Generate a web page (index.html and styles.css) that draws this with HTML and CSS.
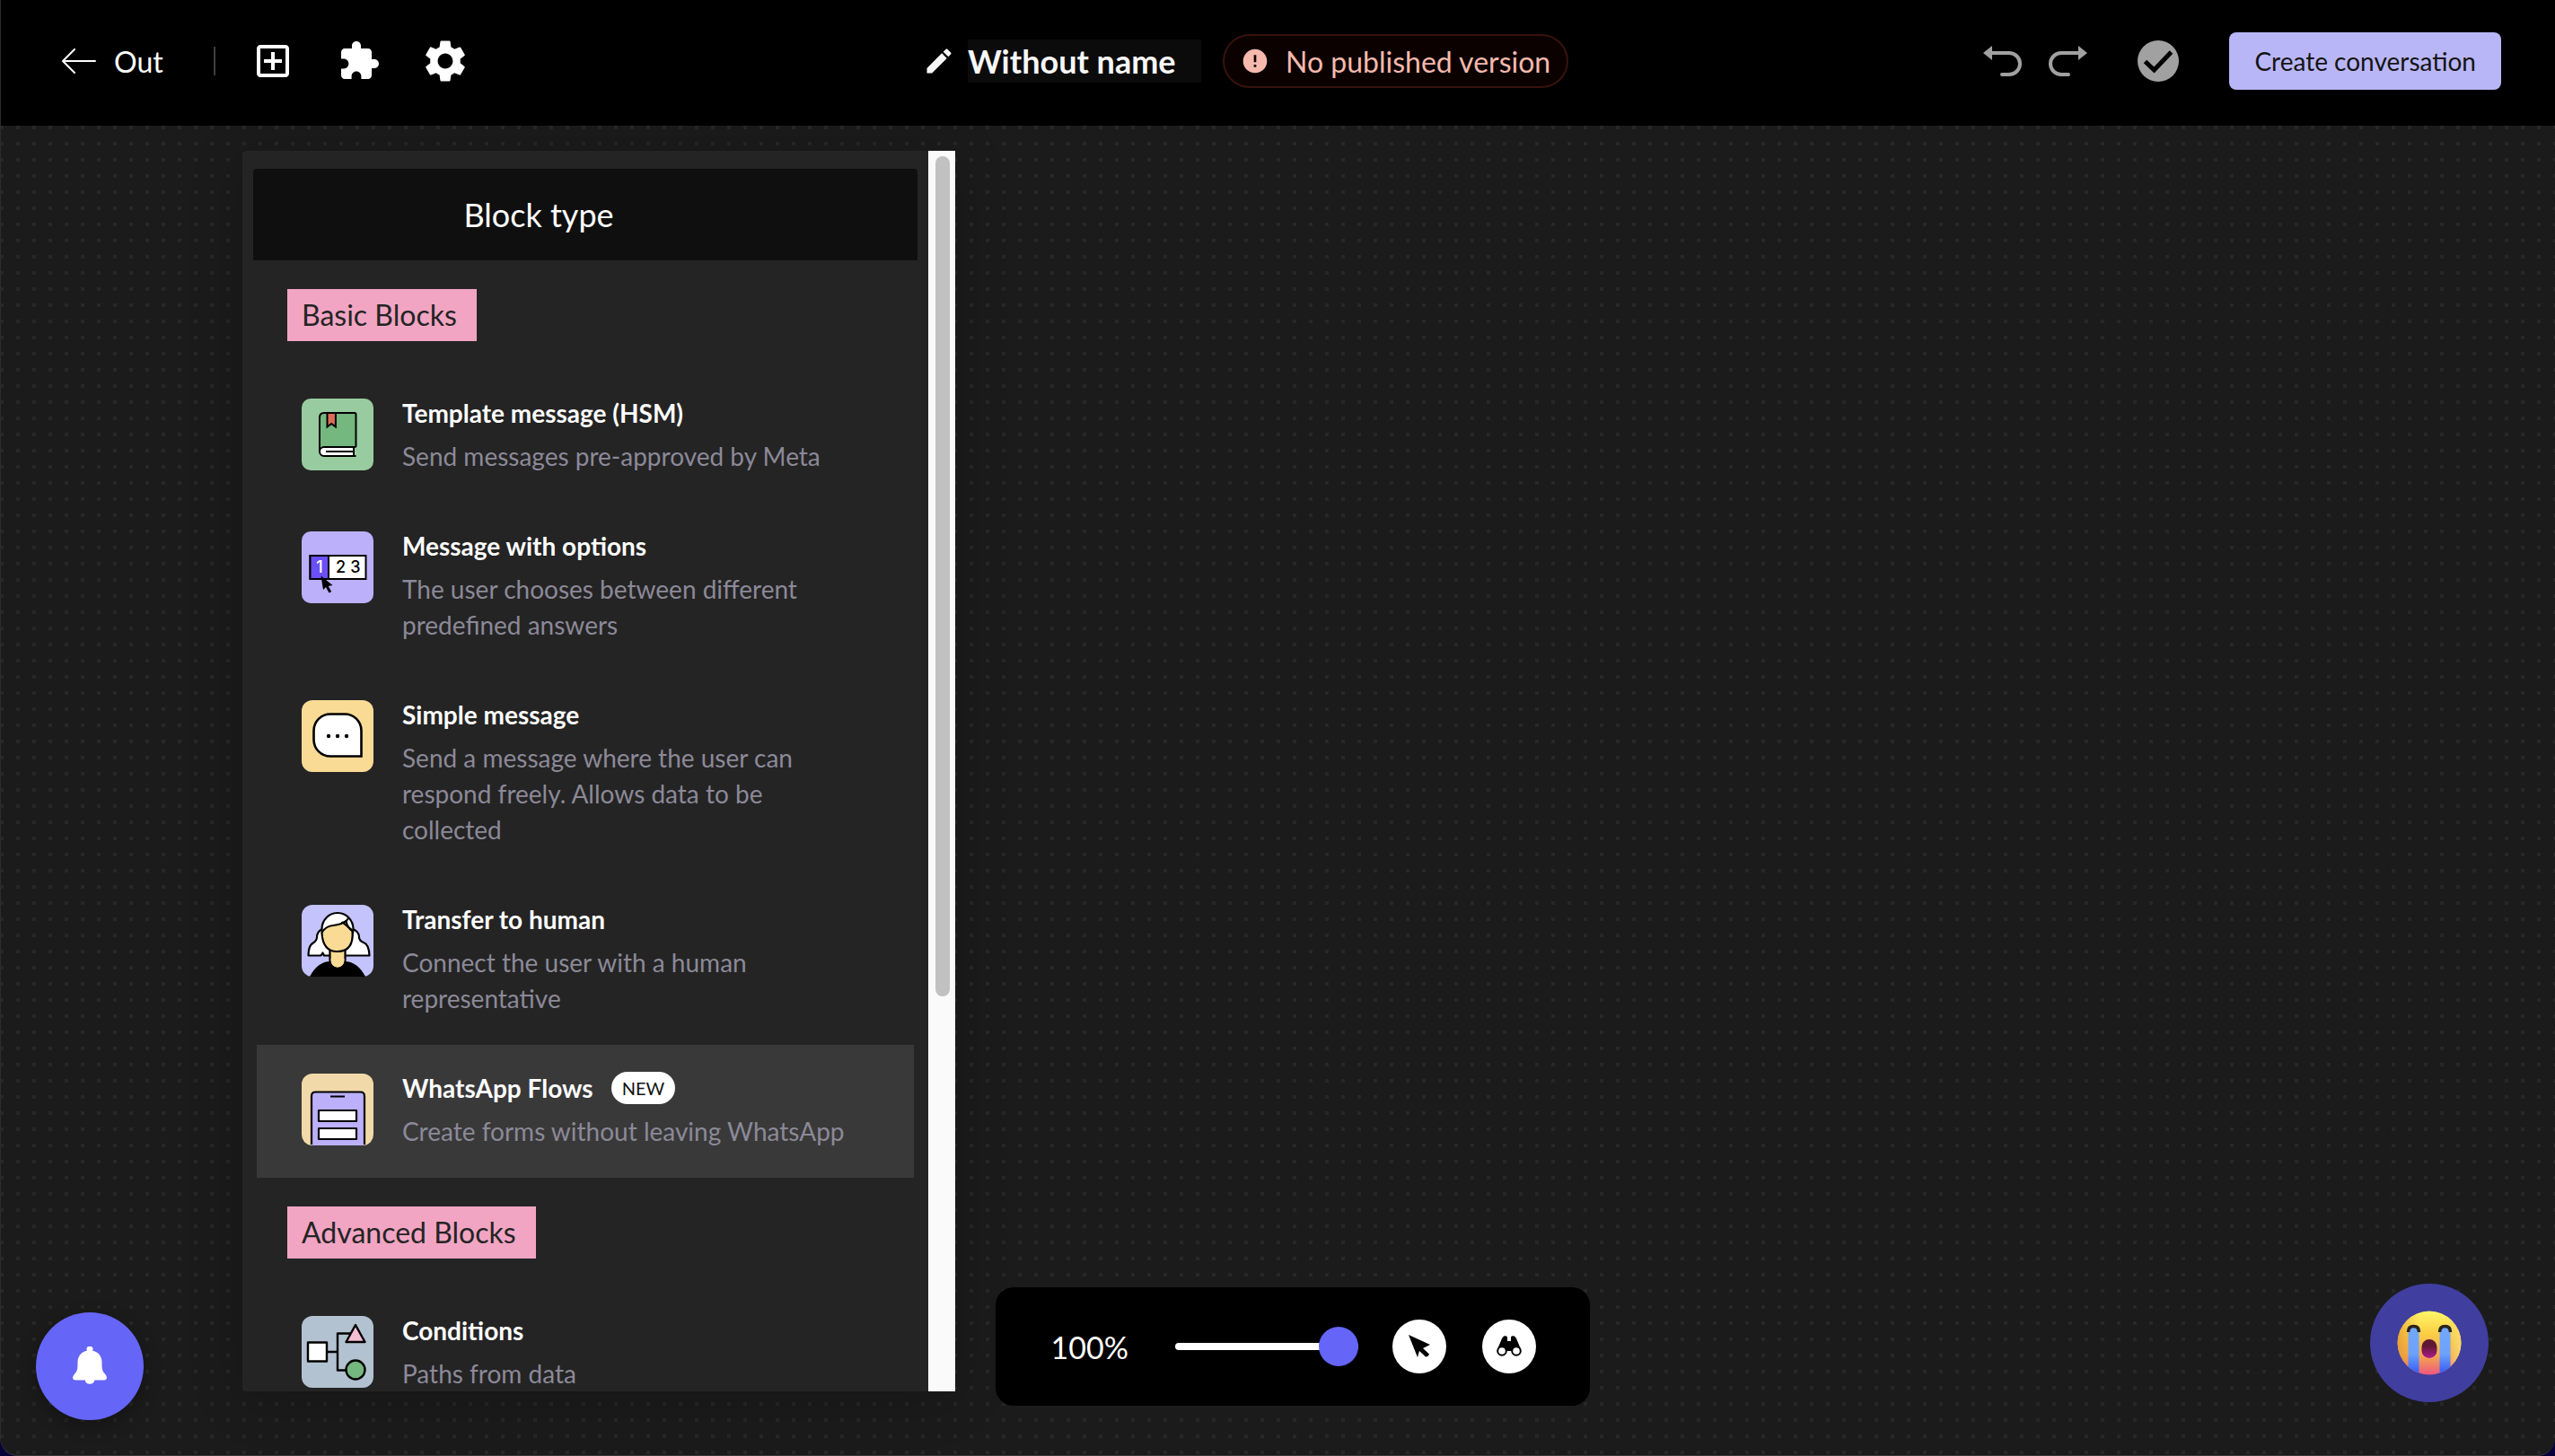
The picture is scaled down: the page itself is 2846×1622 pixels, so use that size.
FILE: index.html
```html
<!DOCTYPE html>
<html lang="en">
<head>
<meta charset="utf-8">
<title>Conversation builder</title>
<link rel="stylesheet" href="styles.css">
</head>
<body>
<div class="app">
  <header class="topbar">
    <nav class="topbar-left">
      <a class="back" href="#">
        <svg width="38" height="28" viewBox="0 0 38 28" fill="none" stroke="currentColor" stroke-width="2" stroke-linecap="round" stroke-linejoin="round"><path d="M37 14H1M14 1L1 14l13 13"/></svg>
        <span>Out</span>
      </a>
      <span class="divider"></span>
      <div class="tools">
        <button class="icon-button" type="button" aria-label="Add block">
          <svg width="48" height="48" viewBox="0 0 24 24" fill="currentColor"><path d="M19 3H5c-1.100 0-2 .9-2 2v14c0 1.100.9 2 2 2h14c1.100 0 2-.9 2-2V5c0-1.100-.9-2-2-2zm0 16H5V5h14v14zm-8-2h2v-4h4v-2h-4V7h-2v4H7v2h4z"/></svg>
        </button>
        <button class="icon-button" type="button" aria-label="Integrations">
          <svg width="48" height="48" viewBox="0 0 24 24" fill="currentColor"><path d="M20.500 11H19V7c0-1.100-.9-2-2-2h-4V3.500C13 2.120 11.880 1 10.500 1S8 2.120 8 3.500V5H4c-1.100 0-1.990.9-1.990 2v3.800H3.500c1.490 0 2.700 1.210 2.700 2.700s-1.210 2.700-2.700 2.700H2V20c0 1.100.9 2 2 2h3.800v-1.500c0-1.490 1.210-2.700 2.700-2.700 1.490 0 2.700 1.210 2.700 2.700V22H17c1.100 0 2-.9 2-2v-4h1.500c1.380 0 2.500-1.120 2.500-2.500S21.880 11 20.500 11z"/></svg>
        </button>
        <button class="icon-button" type="button" aria-label="Settings">
          <svg width="56" height="56" viewBox="0 0 24 24" fill="currentColor"><path d="M19.140 12.940c.04-.3.06-.61.06-.94 0-.32-.02-.64-.07-.94l2.030-1.580c.18-.14.23-.41.12-.61l-1.920-3.320c-.12-.22-.37-.29-.59-.22l-2.390.96c-.5-.38-1.030-.7-1.620-.94l-.36-2.540c-.04-.24-.24-.41-.48-.41h-3.840c-.24 0-.43.17-.47.41l-.36 2.540c-.59.24-1.130.57-1.620.94l-2.390-.96c-.22-.08-.47 0-.59.22L2.740 8.870c-.12.21-.08.47.12.61l2.030 1.580c-.05.3-.09.63-.09.94s.02.64.07.94l-2.030 1.580c-.18.14-.23.41-.12.61l1.920 3.320c.12.22.37.29.59.22l2.390-.96c.5.38 1.030.7 1.620.94l.36 2.540c.05.24.24.41.48.41h3.840c.24 0 .44-.17.47-.41l.36-2.540c.59-.24 1.130-.56 1.620-.94l2.390.96c.22.08.47 0 .59-.22l1.920-3.320c.12-.22.07-.47-.12-.61l-2.010-1.580zM12 15.600c-1.980 0-3.600-1.620-3.600-3.600s1.620-3.600 3.600-3.600 3.600 1.620 3.600 3.600-1.620 3.600-3.600 3.600z"/></svg>
        </button>
      </div>
    </nav>

    <div class="topbar-center">
      <label class="name-field">
        <svg width="36" height="36" viewBox="0 0 24 24" fill="currentColor"><path d="M3 17.250V21h3.750L17.810 9.940l-3.750-3.750L3 17.250zM20.710 7.040c.39-.39.39-1.020 0-1.410l-2.340-2.340c-.39-.39-1.020-.39-1.410 0l-1.830 1.830 3.750 3.750 1.830-1.830z"/></svg>
        <input class="name-input" type="text" value="Without name" aria-label="Conversation name">
      </label>
      <div class="status">
        <svg width="32" height="32" viewBox="0 0 24 24" fill="currentColor"><path d="M12 2C6.480 2 2 6.480 2 12s4.480 10 10 10 10-4.480 10-10S17.520 2 12 2zm1 15h-2v-2h2v2zm0-4h-2V7h2v6z"/></svg>
        <span>No published version</span>
      </div>
    </div>

    <div class="topbar-right">
      <div class="history">
        <button class="icon-button muted" type="button" aria-label="Undo">
          <svg width="44" height="34" viewBox="0 0 44 34"><path d="M0 8L10 0v16z" fill="currentColor"/><path d="M9 8h20a12 12 0 0 1 0 24h-8" fill="none" stroke="currentColor" stroke-width="4" stroke-linecap="round"/></svg>
        </button>
        <button class="icon-button muted" type="button" aria-label="Redo">
          <svg width="44" height="34" viewBox="0 0 44 34"><path d="M44 8L34 0v16z" fill="currentColor"/><path d="M35 8H15a12 12 0 0 0 0 24h8" fill="none" stroke="currentColor" stroke-width="4" stroke-linecap="round"/></svg>
        </button>
      </div>
      <svg class="saved" width="46" height="46" viewBox="0 0 46 46"><circle cx="23" cy="23" r="23" fill="#a1a1a1"/><path d="M8.500 23.500L18.500 33 37.500 13" fill="none" stroke="#000" stroke-width="5"/></svg>
      <button class="primary" type="button">Create conversation</button>
    </div>
  </header>

  <main class="canvas">
    <aside class="panel">
      <div class="panel-body">
        <h2 class="panel-title">Block type</h2>

        <h3 class="tag">Basic Blocks</h3>
        <ul class="blocks">
          <li class="block">
            <svg class="block-icon" viewBox="0 0 80 80">
              <rect width="80" height="80" rx="10" fill="#98cca0"/>
              <path d="M22 17h38v37H20V20q0-3 2-3z" fill="#74b77f"/>
              <path d="M60 54H24a5 5 0 0 0 0 10h34V54z" fill="#fff"/>
              <path d="M20 59V21q0-5 5-5h34q1.500 0 1.500 1.500V53q0 1-1.500 1H25a5 5 0 0 0 0 10h35.500M58 54v10M27 59h31" fill="none" stroke="#000" stroke-width="2"/>
              <path d="M28.500 16v15.500l4.700-3.500 4.700 3.500V16z" fill="#dc6c57" stroke="#000" stroke-width="2"/>
            </svg>
            <div class="block-text">
              <h4>Template message (HSM)</h4>
              <p>Send messages pre-approved by Meta</p>
            </div>
          </li>
          <li class="block">
            <svg class="block-icon" viewBox="0 0 80 80">
              <rect width="80" height="80" rx="10" fill="#bcb0fa"/>
              <rect x="9.500" y="27" width="62" height="26" fill="#fff" stroke="#000" stroke-width="2"/>
              <rect x="9.500" y="27" width="20.500" height="26" fill="#6a50f6" stroke="#000" stroke-width="2"/>
              <g class="digits"><text x="20" y="46" fill="#fff">1</text><text x="43.500" y="46">2</text><text x="60" y="46">3</text></g>
              <path d="M21.500 49.500L24 65l3-3 3.500 6.500 2.700-1.500-3.500-6 4.800-1z" fill="#000"/>
            </svg>
            <div class="block-text">
              <h4>Message with options</h4>
              <p>The user chooses between different predefined answers</p>
            </div>
          </li>
          <li class="block">
            <svg class="block-icon" viewBox="0 0 80 80">
              <rect width="80" height="80" rx="12" fill="#f9db95"/>
              <path d="M32 15.500h16A18.500 18.500 0 0 1 66.500 34v28.500H32A18.500 18.500 0 0 1 13.500 44V34A18.500 18.500 0 0 1 32 15.500z" fill="#fff" stroke="#000" stroke-width="2.600"/>
              <circle cx="30" cy="40" r="2.200"/><circle cx="40" cy="40" r="2.200"/><circle cx="50" cy="40" r="2.200"/>
            </svg>
            <div class="block-text">
              <h4>Simple message</h4>
              <p>Send a message where the user can respond freely. Allows data to be collected</p>
            </div>
          </li>
          <li class="block">
            <svg class="block-icon" viewBox="0 0 80 80">
              <rect width="80" height="80" rx="12" fill="#c4c3fb"/>
              <path d="M9 80Q18 63 32 63h16q14 0 23 17z"/>
              <g stroke="#000" stroke-width="2.200" stroke-linejoin="round">
                <path d="M23 27q-6 3-6 9 0 4-5 7-4.500 3-4.500 13.500h14l2-3 1.500 3H32V27zM57 27q7 3 7 9 0 4 5 6 6 2 6.500 14.500H48V27z" fill="#fff"/>
                <path d="M31.500 48v14a8 8 0 0 0 17 0V48z" fill="#f9db95"/>
                <ellipse cx="40" cy="27" rx="17.500" ry="18" fill="#fff"/>
                <path d="M22.500 31q4-7 12-8 10-1 15-5 1 7 7 11 2 23-17 23-16 0-17-21z" fill="#f9db95"/>
                <path d="M44 20q5 0 8-5M45 19l12 10" fill="none"/>
              </g>
              <path d="M32.600 60v2a7 7 0 0 0 14.800 0v-2z" fill="#f9db95"/>
            </svg>
            <div class="block-text">
              <h4>Transfer to human</h4>
              <p>Connect the user with a human representative</p>
            </div>
          </li>
          <li class="block active">
            <svg class="block-icon" viewBox="0 0 80 80">
              <rect width="80" height="80" rx="12" fill="#f2d9a9"/>
              <path d="M11 80V25q0-4.500 4.500-4.500h50q4.500 0 4.500 4.500v55z" fill="#bcb0fa"/>
              <path d="M11 79V25q0-4.500 4.500-4.500h50q4.500 0 4.500 4.500v54M32 25.500h16" fill="none" stroke="#000" stroke-width="2.200"/>
              <g fill="#fff" stroke="#000" stroke-width="2.200" stroke-linejoin="round"><rect x="19" y="41" width="42" height="12"/><rect x="19" y="61" width="42" height="12"/></g>
            </svg>
            <div class="block-text">
              <h4>WhatsApp Flows <span class="badge">NEW</span></h4>
              <p>Create forms without leaving WhatsApp</p>
            </div>
          </li>
        </ul>

        <h3 class="tag">Advanced Blocks</h3>
        <ul class="blocks">
          <li class="block">
            <svg class="block-icon" viewBox="0 0 80 80">
              <rect width="80" height="80" rx="12" fill="#b3c2d1"/>
              <g stroke="#000" stroke-width="2.400" stroke-linejoin="round">
                <path d="M28 40h12M55 19.500H40v41h10" fill="none"/>
                <rect x="7" y="29.500" width="21" height="21" fill="#fff"/>
                <path d="M60 10l10.500 19h-21z" fill="#f4bfd3"/>
                <circle cx="60" cy="60" r="10.500" fill="#74b77f"/>
              </g>
            </svg>
            <div class="block-text">
              <h4>Conditions</h4>
              <p>Paths from data</p>
            </div>
          </li>
        </ul>
      </div>
      <div class="scrollbar"><div class="scroll-thumb"></div></div>
    </aside>

    <div class="zoombar">
      <label class="zoom-label" for="zoom">100%</label>
      <input class="zoom-range" id="zoom" type="range" min="10" max="100" value="100">
      <div class="zoom-actions">
        <button class="round" type="button" aria-label="Select">
          <svg width="26" height="26" viewBox="0 0 26 26"><path d="M1 0l24 11-8 4 7 6.500q-1 3-4 3L13 18l-2 7z"/></svg>
        </button>
        <button class="round" type="button" aria-label="Explore">
          <svg width="28" height="24" viewBox="0 0 28 24"><path d="M8 .5q3-1 4 1V6h4V1.500q1-2 4-1L22 3l5 12-3-1-6 1-1 2h-6l-1-2-6-1-3 1L6 3z"/><circle cx="6" cy="17" r="4.800" fill="#fff" stroke="#000" stroke-width="2"/><circle cx="22" cy="17" r="4.800" fill="#fff" stroke="#000" stroke-width="2"/></svg>
        </button>
      </div>
    </div>

    <button class="fab bell" type="button" aria-label="Notifications">
      <svg width="38" height="44" viewBox="0 0 38 44" fill="#fff"><path d="M19 0a2.800 2.800 0 0 1 2.800 4.600C28.500 6 32.500 11 32.500 18c0 9 .5 9 4.500 14 2 3 .5 5.500-2 5.500H24.300a5.400 5.400 0 0 1-10.600 0H3C.5 37.500-1 35 1 32c4-5 4.500-5 4.500-14C5.500 11 9.500 6 16.200 4.600A2.800 2.800 0 0 1 19 0z"/></svg>
    </button>

    <button class="fab feedback" type="button" aria-label="Feedback">
      <svg width="72" height="72" viewBox="0 0 72 72">
        <defs>
          <linearGradient id="face" x1="0" y1="0" x2="0" y2="1"><stop offset="0" stop-color="#fff868"/><stop offset=".35" stop-color="#fbcf46"/><stop offset=".7" stop-color="#f3a750"/><stop offset="1" stop-color="#ee5580"/></linearGradient>
          <linearGradient id="side" x1="0" y1="0" x2="1" y2="0"><stop offset="0" stop-color="#dd8a2c" stop-opacity=".6"/><stop offset=".35" stop-color="#f0b040" stop-opacity="0"/><stop offset=".75" stop-color="#f8d870" stop-opacity="0"/><stop offset="1" stop-color="#f8e070" stop-opacity=".9"/></linearGradient>
          <linearGradient id="tear" x1="0" y1="0" x2="0" y2="1"><stop offset="0" stop-color="#72a7fa"/><stop offset=".55" stop-color="#6ea2fa"/><stop offset=".9" stop-color="#3d66f6"/></linearGradient>
          <linearGradient id="mouth" x1="0" y1="0" x2="0" y2="1"><stop offset=".35" stop-color="#5e1733"/><stop offset="1" stop-color="#b01a90"/></linearGradient>
          <clipPath id="disc"><circle cx="36" cy="36" r="35.500"/></clipPath>
        </defs>
        <g clip-path="url(#disc)">
          <rect width="72" height="72" fill="url(#face)"/><rect width="72" height="72" fill="url(#side)"/>
          <path d="M12.500 72V24q0-5 6-5t6 5v48zM47.500 72V24q0-5 6-5t6 5v48z" fill="url(#tear)"/>
        </g>
        <path d="M12.500 24q0-6.500 6-6.500t6 6.500M47.500 24q0-6.500 6-6.500t6 6.500" fill="none" stroke="#272320" stroke-width="3.500"/>
        <rect x="27.500" y="32" width="17" height="21" rx="8.500" fill="url(#mouth)"/>
      </svg>
    </button>
  </main>
</div>
</body>
</html>
```

FILE: styles.css
```css
* { box-sizing: border-box; }

body {
  margin: 0;
  background: #08003a;
  color: #fff;
  font-family: Lato, "Liberation Sans", sans-serif;
  font-size: 28px;
}

h2, h3, h4, p, ul { margin: 0; padding: 0; font-weight: 400; }
ul { list-style: none; }
svg { display: block; flex: none; }
button, input { font: inherit; color: inherit; }
button { border: 0; padding: 0; background: none; cursor: pointer; }

.app {
  display: flex;
  flex-direction: column;
  height: 100vh;
  border-left: 1px solid #2c2c2c;
  border-bottom: 1px solid #3a3a3a;
  border-radius: 0 0 20px 20px;
  overflow: hidden;
  background: #1b1b1b;
}

/* Top bar */
.topbar {
  display: flex;
  align-items: center;
  justify-content: space-between;
  height: 140px;
  flex: none;
  padding: 0 60px 4px 68px;
  background: #000;
}

.topbar-left { display: flex; align-items: center; padding-right: 48px; }

.back {
  display: flex;
  align-items: center;
  gap: 20px;
  color: #fff;
  font-size: 32px;
  text-decoration: none;
}

.divider { width: 2px; height: 32px; margin: 0 40px 0 56px; background: #3f3f42; }
.tools { display: flex; align-items: center; gap: 48px; }

.icon-button {
  display: flex;
  align-items: center;
  justify-content: center;
  width: 48px;
  height: 48px;
}

.muted { color: #a1a1a1; }
.topbar-center { display: flex; align-items: center; gap: 24px; }
.name-field { display: flex; align-items: center; gap: 14px; color: #f7f7f7; }

.name-input {
  width: 260px;
  height: 48px;
  padding: 0;
  border: 0;
  background: #0b0b0b;
  font-size: 36px;
  font-weight: 700;
}

.status {
  display: flex;
  align-items: center;
  gap: 18px;
  height: 60px;
  padding: 0 18px;
  border: 2px solid #37130c;
  border-radius: 30px;
  background: #0b0200;
  color: #f5b9ad;
  font-size: 32px;
}

.topbar-right { display: flex; align-items: center; }
.history { display: flex; gap: 24px; }
.saved { margin: 0 56px 0 54px; }

.primary {
  height: 64px;
  padding: 0 28px;
  border-radius: 8px;
  background: #b9b6f8;
  color: #141414;
  font-size: 28px;
}

/* Canvas with its dotted grid */
.canvas {
  position: relative;
  display: flex;
  flex: 1;
  min-height: 0;
  padding: 28px 0 71px 269px;
  background-color: #1b1b1b;
  background-image: conic-gradient(from 270deg at 4px 4px, #272727 90deg, transparent 0);
  background-size: 18px 18px;
  background-position: -1px 0;
}

.panel {
  display: flex;
  width: 794px;
  border-radius: 4px 0 0 4px;
  overflow: hidden;
  background: #242424;
  box-shadow: 0 8px 60px rgba(0, 0, 0, .2);
}

.panel-body { flex: 1; overflow: hidden; padding: 20px 12px 0; }

.panel-title {
  height: 102px;
  padding-right: 104px;
  border-radius: 4px 4px 0 0;
  background: #0f0f0f;
  font-size: 36px;
  line-height: 102px;
  text-align: center;
}

.tag {
  width: max-content;
  height: 58px;
  margin: 32px 38px;
  padding: 0 22px 0 16px;
  background: #f2a5c3;
  color: #242424;
  font-size: 32px;
  line-height: 58px;
}

.blocks { padding: 0 4px; }
.block { display: flex; gap: 32px; padding: 32px 70px 32px 50px; }
.active { background: #393939; }
.block-icon { width: 80px; height: 80px; }
.block-text { flex: 1; }

.block h4 {
  display: flex;
  align-items: center;
  gap: 20px;
  height: 32px;
  margin-bottom: 12px;
  font-size: 28px;
  font-weight: 700;
  line-height: 32px;
}

.block p { color: #8c8998; font-size: 28px; line-height: 40px; }

.badge {
  height: 36px;
  padding: 0 12px;
  border-radius: 18px;
  background: #fff;
  color: #141414;
  font-size: 20px;
  font-weight: 400;
  line-height: 36px;
}

.digits { font-family: Inter, sans-serif; font-size: 18px; font-weight: 500; text-anchor: middle; }

.scrollbar {
  width: 30px;
  padding: 6px 6px 0 8px;
  background: #fafafa;
}

.scroll-thumb { height: 68%; border-radius: 8px; background: #c1c1c1; }

/* Zoom controls */
.zoombar {
  position: absolute;
  left: calc(50% + 16px);
  bottom: 55px;
  transform: translateX(-50%);
  display: flex;
  align-items: center;
  width: 662px;
  height: 132px;
  padding: 0 60px 0 62px;
  border-radius: 20px;
  background: #000;
}

.zoom-label { width: 138px; font-size: 34px; }

.zoom-range {
  width: 204px;
  height: 44px;
  margin: 0 38px 0 0;
  appearance: none;
  background: none;
}

.zoom-range::-webkit-slider-runnable-track { height: 8px; border-radius: 4px; background: #fff; }

.zoom-range::-webkit-slider-thumb {
  appearance: none;
  width: 44px;
  height: 44px;
  margin-top: -18px;
  border-radius: 50%;
  background: #6565f8;
}

.zoom-actions { display: flex; gap: 40px; }

.round {
  display: flex;
  align-items: center;
  justify-content: center;
  width: 60px;
  height: 60px;
  border-radius: 50%;
  background: #fff;
}

/* Floating buttons */
.fab {
  position: absolute;
  display: flex;
  align-items: center;
  justify-content: center;
  border-radius: 50%;
}

.bell {
  left: 39px;
  bottom: 39px;
  width: 120px;
  height: 120px;
  background: #6565f8;
  box-shadow: 0 6px 20px rgba(0, 0, 0, .3);
}

.feedback { right: 74px; bottom: 59px; width: 132px; height: 132px; background: #403e9f; }
```
